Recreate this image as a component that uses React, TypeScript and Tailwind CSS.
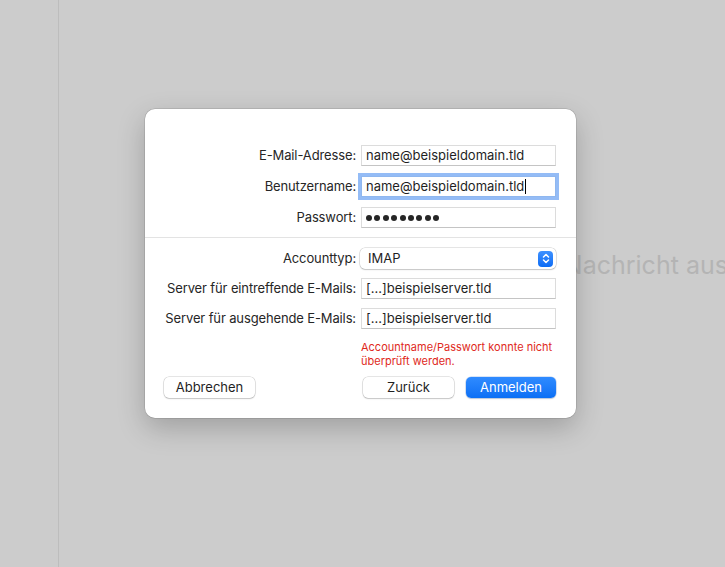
import React from 'react';

const font = { fontFamily: 'Inter, "Liberation Sans", sans-serif' };

const Field = ({ value, focused }: { value: string; focused?: boolean }) => (
  <div
    className={`h-[21px] flex items-center bg-white border pl-[4px] text-[13px] text-[#1f1f1f] leading-none whitespace-nowrap ${
      focused
        ? 'border-[#8fb7ef] shadow-[0_0_0_3px_#94bcf6]'
        : 'border-[#dcdcdc] border-b-[#c4c4c4]'
    }`}
  >
    {value}
    {focused && <span className="ml-[1px] inline-block w-[1px] h-[15px] bg-black" />}
  </div>
);

const Label = ({ children }: { children: React.ReactNode }) => (
  <div className="h-[21px] flex items-center justify-end text-[13px] tracking-[-0.13px] text-[#262626] whitespace-nowrap">
    {children}
  </div>
);

export default function App() {
  return (
    <div className="relative w-[725px] h-[567px] overflow-hidden bg-[#cccccc] flex" style={font}>
      {/* sidebar + empty message pane behind the sheet */}
      <div className="shrink-0 w-[59px] h-full border-r border-[#bdbdbd]" />
      <div className="flex-1 min-w-0 overflow-hidden pl-[432px] pt-[250px]">
        <div className="text-[25px] leading-[30px] text-[#b4b4b4] whitespace-nowrap">Keine Nachricht ausgewählt</div>
      </div>

      {/* account sheet */}
      <div className="absolute left-[145px] top-[109px] w-[431px] h-[309px] bg-white rounded-[10px] shadow-[0_0_0_0.5px_rgba(0,0,0,0.18),0_10px_28px_rgba(0,0,0,0.22)] flex flex-col pt-[36px]">
        <div className="grid grid-cols-[minmax(0,1fr)_195px] gap-x-[5px] gap-y-[10px] px-[20px]">
          <Label>E-Mail-Adresse:</Label>
          <Field value="name@beispieldomain.tld" />
          <Label>Benutzername:</Label>
          <Field value="name@beispieldomain.tld" focused />
          <Label>Passwort:</Label>
          <div className="h-[21px] flex items-center bg-white border border-[#dcdcdc] border-b-[#c4c4c4] pl-[4px] gap-[2.4px]">
            {Array.from({ length: 9 }).map((_, i) => (
              <span key={i} className="w-[6px] h-[6px] rounded-full bg-[#262626]" />
            ))}
          </div>
        </div>

        <div className="mt-[9px] border-t border-[#e3e3e3]" />

        <div className="mt-[10px] grid grid-cols-[minmax(0,1fr)_195px] gap-x-[5px] gap-y-[9px] px-[20px]">
          <Label>Accounttyp:</Label>
          <div className="-ml-[1px] h-[21px] flex items-center justify-between bg-white rounded-[5px] shadow-[0_0_0_0.5px_rgba(0,0,0,0.2),0_1px_1.5px_rgba(0,0,0,0.15)] pl-[8px] pr-[3px] text-[13px] text-[#1f1f1f]">
            <span>IMAP</span>
            <span className="w-[15px] h-[16px] rounded-[4px] bg-gradient-to-b from-[#3d91ff] to-[#0a6cf5] flex items-center justify-center">
              <svg width="8" height="11" viewBox="0 0 8 11" fill="none" stroke="white" strokeWidth="1.5" strokeLinecap="round" strokeLinejoin="round">
                <path d="M1.5 4 L4 1.5 L6.5 4" />
                <path d="M1.5 7 L4 9.5 L6.5 7" />
              </svg>
            </span>
          </div>
          <Label>Server für eintreffende E-Mails:</Label>
          <Field value="[...]beispielserver.tld" />
          <Label>Server für ausgehende E-Mails:</Label>
          <Field value="[...]beispielserver.tld" />
        </div>

        <div className="mt-[11px] pl-[216px] text-[11px] leading-[14px] text-[#e0291c]">
          Accountname/Passwort konnte nicht
          <br />
          überprüft werden.
        </div>

        <div className="mt-[9px] flex items-center pl-[19px] pr-[20px] text-[13px]">
          <button className="w-[91px] h-[21px] rounded-[5px] bg-white text-[#1f1f1f] shadow-[0_0_0_0.5px_rgba(0,0,0,0.2),0_1px_1.5px_rgba(0,0,0,0.15)]">
            Abbrechen
          </button>
          <div className="flex-1" />
          <button className="w-[91px] h-[21px] rounded-[5px] bg-white text-[#1f1f1f] shadow-[0_0_0_0.5px_rgba(0,0,0,0.2),0_1px_1.5px_rgba(0,0,0,0.15)]">
            Zurück
          </button>
          <button className="ml-[12px] w-[90px] h-[21px] rounded-[5px] bg-gradient-to-b from-[#2f8bff] to-[#0a6ff5] text-white shadow-[0_0_0_0.5px_rgba(0,80,200,0.3),0_1px_1.5px_rgba(0,0,0,0.15)]">
            Anmelden
          </button>
        </div>
      </div>
    </div>
  );
}
